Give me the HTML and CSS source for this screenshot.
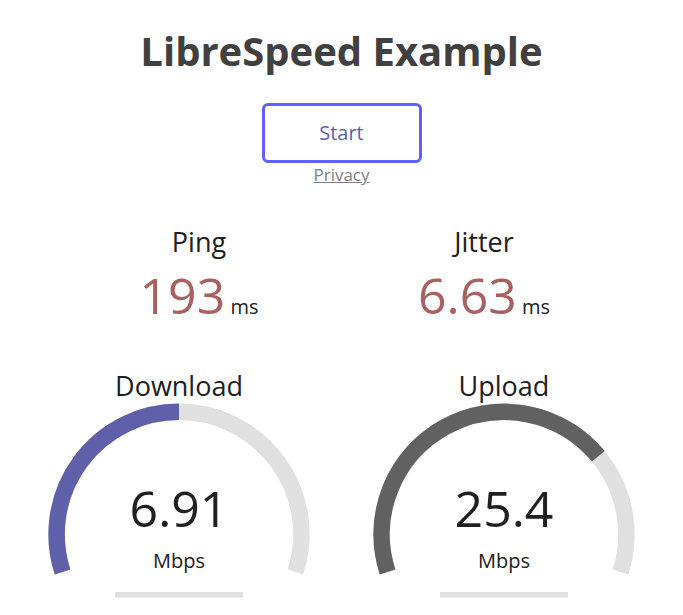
FILE: index.html
```html
<!DOCTYPE html>
<html lang="en">
<head>
    <meta charset="UTF-8">
    <meta name="viewport" content="width=device-width, initial-scale=1.0">
    <title>LibreSpeed Example</title>
    <link rel="stylesheet" href="styles.css">
</head>
<body>
    <h1>LibreSpeed Example</h1>
    <div class="start-btn" id="startStopBtn">Start</div>
    <div class="privacy-row"><a href="#" class="privacy">Privacy</a></div>

    <div class="test">
        <div class="test-group">
            <div class="test-area-small">
                <div class="test-name">Ping</div>
                <div class="value-line">
                    <span class="meter-text result">193</span>
                    <span class="unit">ms</span>
                </div>
            </div>
            <div class="test-area-small">
                <div class="test-name">Jitter</div>
                <div class="value-line">
                    <span class="meter-text result">6.63</span>
                    <span class="unit">ms</span>
                </div>
            </div>
        </div>

        <div class="test-group">
            <div class="test-area">
                <div class="test-name">Download</div>
                <svg class="meter" viewBox="0 0 320 250">
                    <path d="M43.60 208.07 A122.39 122.39 0 1 1 276.40 208.07" class="meter-bk"/>
                    <path d="M43.60 208.07 A122.39 122.39 0 0 1 160 47.86" class="meter-dl"/>
                    <rect x="96" y="228" width="128" height="5.5" class="meter-prog"/>
                </svg>
                <div class="meter-text">6.91</div>
                <div class="unit">Mbps</div>
            </div>
            <div class="test-area">
                <div class="test-name">Upload</div>
                <svg class="meter" viewBox="0 0 320 250">
                    <path d="M43.60 208.07 A122.39 122.39 0 1 1 276.40 208.07" class="meter-bk"/>
                    <path d="M43.60 208.07 A122.39 122.39 0 0 1 254.34 92.28" class="meter-ul"/>
                    <rect x="96" y="228" width="128" height="5.5" class="meter-prog"/>
                </svg>
                <div class="meter-text">25.4</div>
                <div class="unit">Mbps</div>
            </div>
        </div>
    </div>
</body>
</html>
```
FILE: styles.css
```css
html, body {
    border: none;
    padding: 0;
    margin: 0;
    background: #FFFFFF;
    color: #202020;
}

body {
    text-align: center;
    font-family: "Open Sans", "Noto Sans", sans-serif;
    font-size: 20px;
}

h1 {
    color: #404040;
    font-size: 40px;
    margin: 25px 0 26px 0;
    line-height: 52px;
}

.start-btn {
    margin: 0 auto;
    color: #6060AA;
    border: 3px solid #6060FF;
    border-radius: 6px;
    box-sizing: border-box;
    width: 160px;
    height: 60px;
    line-height: 54px;
    cursor: pointer;
}

.privacy-row {
    line-height: 22px;
}

.privacy {
    color: #808080;
    font-size: 17px;
}

.test {
    margin-top: 40px;
}

.test-group {
    display: flex;
    justify-content: center;
    gap: 5px;
}

.test-area-small {
    width: 280px;
    height: 138px;
    box-sizing: border-box;
}

.test-area-small .test-name {
    font-size: 27px;
    line-height: 32px;
}

.value-line {
    margin-top: 3px;
    line-height: 68px;
}

.meter-text {
    font-size: 50px;
}

.result {
    color: #AA6060;
}

.test-area {
    width: 320px;
    height: 250px;
    position: relative;
    box-sizing: border-box;
}

.test-area .test-name {
    position: absolute;
    top: 3px;
    left: 0;
    width: 100%;
    font-size: 27px;
    z-index: 9;
}

.test-area .meter-text {
    position: absolute;
    bottom: 72px;
    left: 0;
    width: 100%;
    z-index: 9;
}

.test-area .unit {
    position: absolute;
    bottom: 40px;
    left: 0;
    width: 100%;
    z-index: 9;
}

.meter {
    position: absolute;
    top: 0;
    left: 0;
    width: 100%;
    height: 100%;
    z-index: 1;
}

.meter-bk, .meter-dl, .meter-ul {
    fill: none;
    stroke-width: 16.5;
}

.meter-bk {
    stroke: #E0E0E0;
}

.meter-dl {
    stroke: #6060AA;
}

.meter-ul {
    stroke: #616161;
}

.meter-prog {
    fill: #E0E0E0;
}
```
